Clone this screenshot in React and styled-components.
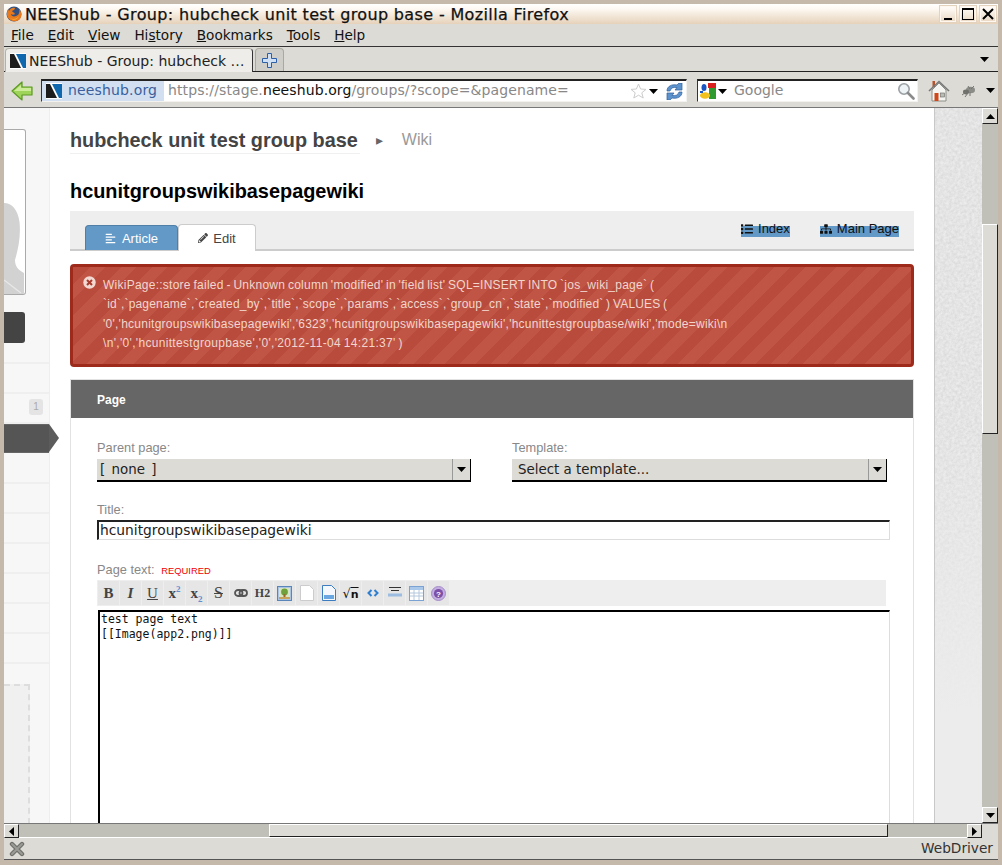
import React from "react";
import styled, { createGlobalStyle } from "styled-components";
import { FaAlignLeft, FaPencilAlt, FaList, FaSitemap } from "react-icons/fa";

const GlobalStyle = createGlobalStyle`
  html, body {
    margin: 0;
    padding: 0;
    width: 1002px;
    height: 865px;
    overflow: hidden;
    background: #c4b9ab;
  }
  * { box-sizing: border-box; }
`;

const chromeFont = `"DejaVu Sans", sans-serif`;
const pageFont = `"Liberation Sans", Arial, sans-serif`;

const noise = encodeURIComponent(
  `<svg xmlns="http://www.w3.org/2000/svg" width="96" height="240"><filter id="n"><feTurbulence type="fractalNoise" baseFrequency=".35" numOctaves="3" stitchTiles="stitch"/><feColorMatrix values="0 0 0 0 .55 0 0 0 0 .55 0 0 0 0 .55 .7 0 0 0 -.15"/></filter><rect width="96" height="240" filter="url(#n)"/></svg>`
);

const NLogo = ({ size = 16 }) => (
  <svg width={size} height={size} viewBox="0 0 16 16">
    <rect width="16" height="16" fill="#fff" />
    <polygon points="0,1 4,1 11,15 0,15" fill="#1c1c1c" />
    <polygon points="6,1 16,1 16,15 13,15" fill="#0f68ad" />
  </svg>
);

const Triangle = () => (
  <svg width="9" height="5" viewBox="0 0 9 5">
    <polygon points="0,0 9,0 4.5,5" fill="#000" />
  </svg>
);

const Firefox = () => (
  <svg width="16" height="16" viewBox="0 0 16 16">
    <circle cx="8" cy="8" r="7.5" fill="#33507f" />
    <path d="M2 3 C1 6 0 10 3 13 C6 16 11 16 14 13 C16 10 16 6 13 3 C14 6 13 9 10 10 C8 11 5 10 5 8 C6 9 8 9 9 8 C8 6 6 6 6 5 C7 4 9 4 9 2 C6 1 4 3 3 5 Z" fill="#e8791c" />
    <path d="M4 12 C7 14 11 13 13 10 C12 14 7 15 4 12 Z" fill="#f5b13a" />
  </svg>
);

const BackArrow = () => (
  <svg width="22" height="20" viewBox="0 0 22 20">
    <path d="M1 10 L11 1 L11 6 L21 6 L21 14 L11 14 L11 19 Z" fill="#9fd45a" stroke="#5c9a22" strokeWidth="1.2" strokeLinejoin="round" />
    <path d="M3 10 L10 4 L10 7 L20 7 L20 10 Z" fill="#cdec9a" />
  </svg>
);

const Star = () => (
  <svg width="17" height="16" viewBox="0 0 17 16">
    <polygon points="8.5,1 10.6,6 16,6.4 11.8,9.8 13.2,15 8.5,12.2 3.8,15 5.2,9.8 1,6.4 6.4,6" fill="#fff" stroke="#ccc" />
  </svg>
);

const Reload = () => (
  <svg width="17" height="17" viewBox="0 0 17 17">
    <path d="M1 8 C1 3 6 1 11 2 L13 0 L16 0 L16 7 L9 7 L11 4.5 C7 4 5 5 4 8 Z" fill="#5d93cc" stroke="#2f5f9c" strokeWidth=".7" />
    <path d="M16 9 C16 14 11 16 6 15 L4 17 L1 17 L1 10 L8 10 L6 12.5 C10 13 12 12 13 9 Z" fill="#5d93cc" stroke="#2f5f9c" strokeWidth=".7" />
  </svg>
);

const GoogleMark = () => (
  <svg width="16" height="16" viewBox="0 0 16 16">
    <rect x="8" y="0" width="8" height="5" fill="#d8201c" />
    <ellipse cx="4" cy="4.5" rx="2.5" ry="3.5" fill="#1a55c4" />
    <rect x="9" y="5" width="7" height="11" fill="#2f9a2f" />
    <ellipse cx="5" cy="12.5" rx="5" ry="3.2" fill="#f2c11e" />
    <rect x="0" y="8" width="3" height="2" fill="#1a55c4" />
  </svg>
);

const Magnifier = () => (
  <svg width="18" height="18" viewBox="0 0 18 18">
    <circle cx="7" cy="7" r="5.2" fill="#eef3f6" stroke="#9aa0a4" strokeWidth="1.6" />
    <path d="M11 11 L16.5 16.5" stroke="#8a8a8a" strokeWidth="2.6" strokeLinecap="round" />
  </svg>
);

const HomeIcon = () => (
  <svg width="22" height="22" viewBox="0 0 22 22">
    <rect x="4.5" y="1" width="2.5" height="6" fill="#b5532c" />
    <polygon points="4,10 11,3 18,10 18,21 4,21" fill="#f4f4f0" stroke="#8d8f8a" />
    <path d="M1 11 L11 1.5 L21 11" fill="none" stroke="#777" strokeWidth="1.6" />
    <rect x="6.5" y="13" width="4" height="8" fill="#d0471a" />
    <rect x="12.5" y="13" width="4" height="4" fill="#b9bdb4" stroke="#666" strokeWidth=".6" />
  </svg>
);

const BugIcon = () => (
  <svg width="16" height="14" viewBox="0 0 16 14">
    <ellipse cx="9.5" cy="6" rx="4.5" ry="3.2" fill="#8b8b88" />
    <ellipse cx="5" cy="8" rx="3" ry="2.4" fill="#6f6f6c" />
    <path d="M1 11 L5 8 M4 13 L7 9 M9 12 L9 8 M13 2 L10 5 M7 2 L9 5" stroke="#777" strokeWidth="1" />
  </svg>
);

const ScrollArrow = ({ dir }) => {
  const points = {
    up: "0,5 9,5 4.5,0",
    down: "0,0 9,0 4.5,5",
    left: "5,0 5,9 0,4.5",
    right: "0,0 0,9 5,4.5",
  }[dir];
  const vertical = dir === "up" || dir === "down";
  return (
    <svg width={vertical ? 9 : 5} height={vertical ? 5 : 9} viewBox={vertical ? "0 0 9 5" : "0 0 5 9"}>
      <polygon points={points} fill="#000" />
    </svg>
  );
};

const Silhouette = () => (
  <svg width="20" height="100" viewBox="0 0 20 100">
    <path d="M0 9 C8 9 14 16 15.5 28 C17 42 14 56 11 66 C11 72 14 76 20 79 L20 100 L0 100 Z" fill="#d2d2d2" />
    <path d="M0 86 L17 99" stroke="#e8e8e8" strokeWidth="1.2" />
  </svg>
);

const ErrorIcon = () => (
  <svg width="13" height="13" viewBox="0 0 13 13">
    <circle cx="6.5" cy="6.5" r="6.2" fill="#f3d9d2" />
    <path d="M4 4 L9 9 M9 4 L4 9" stroke="#a93b2d" strokeWidth="2" />
  </svg>
);

const StopIcon = () => (
  <svg width="16" height="16" viewBox="0 0 16 16">
    <path d="M3 3 L13 13 M13 3 L3 13" stroke="#6f6f6c" strokeWidth="4.4" strokeLinecap="round" />
    <path d="M3 3 L13 13 M13 3 L3 13" stroke="#9a9a96" strokeWidth="2" strokeLinecap="round" />
  </svg>
);

const tools = {
  image: (
    <svg width="15" height="15" viewBox="0 0 15 15">
      <rect x=".5" y=".5" width="14" height="14" fill="#a9c4e4" stroke="#5a85b8" />
      <rect x="2" y="2" width="11" height="11" fill="#d9e6c4" />
      <circle cx="7.5" cy="6" r="3.4" fill="#6fa03a" />
      <rect x="6.5" y="8" width="2" height="3" fill="#9a6a2c" />
      <rect x="2" y="11" width="11" height="2" fill="#c9a25a" />
    </svg>
  ),
  page: (
    <svg width="14" height="16" viewBox="0 0 14 16">
      <path d="M.5 .5 H9.5 L13.5 4.5 V15.5 H.5 Z" fill="#fff" stroke="#ccc" />
    </svg>
  ),
  pageBlue: (
    <svg width="14" height="16" viewBox="0 0 14 16">
      <path d="M.5 .5 H9.5 L13.5 4.5 V15.5 H.5 Z" fill="#f4f8fc" stroke="#3c7cc0" />
      <rect x="2" y="10" width="10" height="4" fill="#6aa6e0" />
    </svg>
  ),
  code: (
    <svg width="12" height="8" viewBox="0 0 12 8">
      <path d="M4.5 1 L1.5 4 L4.5 7 M7.5 1 L10.5 4 L7.5 7" fill="none" stroke="#2f7fd0" strokeWidth="2" />
    </svg>
  ),
  lines: (
    <svg width="14" height="14" viewBox="0 0 14 14">
      <path d="M1 1.5 H13 M3 4.5 H11" stroke="#333" strokeWidth="1" />
      <path d="M0 9 H14" stroke="#9cbce2" strokeWidth="3" />
    </svg>
  ),
  table: (
    <svg width="15" height="15" viewBox="0 0 15 15">
      <rect x=".5" y=".5" width="14" height="14" fill="#fff" stroke="#7aa2d2" />
      <rect x="1" y="1" width="13" height="3" fill="#a9c8ea" />
      <path d="M1 7 H14 M1 10 H14 M5 4 V14 M10 4 V14" stroke="#b4c8de" />
    </svg>
  ),
  help: (
    <svg width="15" height="15" viewBox="0 0 15 15">
      <circle cx="7.5" cy="7.5" r="7" fill="#c2aee0" stroke="#a58cc8" />
      <circle cx="7.5" cy="7.5" r="4.6" fill="#7c4fa8" />
      <text x="7.5" y="10.5" fontSize="8" fontWeight="bold" fill="#fff" textAnchor="middle" fontFamily="Liberation Sans">?</text>
    </svg>
  ),
  link: (
    <svg width="14" height="8" viewBox="0 0 14 8">
      <rect x="1" y="1" width="7.5" height="6" rx="3" fill="none" stroke="#555" strokeWidth="1.8" />
      <rect x="5.5" y="1" width="7.5" height="6" rx="3" fill="none" stroke="#555" strokeWidth="1.8" />
    </svg>
  ),
};

const App = () => {
  return (
    <>
      <GlobalStyle />
      <Frame>
        <TitleBar>
          <Firefox />
          <TitleText>NEEShub - Group: hubcheck unit test group base - Mozilla Firefox</TitleText>
          <WinButtons>
            <WinButton><MinBar /></WinButton>
            <WinButton><MaxBox /></WinButton>
            <WinButton>
              <svg width="12" height="12" viewBox="0 0 12 12">
                <path d="M1 1 L11 11 M11 1 L1 11" stroke="#000" strokeWidth="2" />
              </svg>
            </WinButton>
          </WinButtons>
        </TitleBar>

        <MenuBar>
          <MenuItem><u>F</u>ile</MenuItem>
          <MenuItem><u>E</u>dit</MenuItem>
          <MenuItem><u>V</u>iew</MenuItem>
          <MenuItem>Hi<u>s</u>tory</MenuItem>
          <MenuItem><u>B</u>ookmarks</MenuItem>
          <MenuItem><u>T</u>ools</MenuItem>
          <MenuItem><u>H</u>elp</MenuItem>
        </MenuBar>

        <TabStrip>
          <BrowserTab>
            <NLogo />
            <BrowserTabText>NEEShub - Group: hubcheck …</BrowserTabText>
          </BrowserTab>
          <NewTab>
            <svg width="15" height="15" viewBox="0 0 15 15">
              <path d="M5.5 .5 H9.5 V5.5 H14.5 V9.5 H9.5 V14.5 H5.5 V9.5 H.5 V5.5 H5.5 Z" fill="#cfe0f4" stroke="#2d5fa8" />
            </svg>
          </NewTab>
          <TabListArrow><Triangle /></TabListArrow>
        </TabStrip>

        <NavBar>
          <BackSlot><BackArrow /></BackSlot>
          <UrlBar>
            <Identity>
              <NLogo />
              <BarText>neeshub.org</BarText>
            </Identity>
            <UrlText>https://stage.<b>neeshub.org</b>/groups/?scope=&amp;pagename=</UrlText>
            <UrlIcons>
              <Star />
              <Triangle />
              <ReloadSlot><Reload /></ReloadSlot>
            </UrlIcons>
          </UrlBar>
          <SearchBar>
            <GoogleMark />
            <SearchArrow><Triangle /></SearchArrow>
            <SearchText>Google</SearchText>
            <Magnifier />
          </SearchBar>
          <NavEnd>
            <HomeIcon />
            <BugIcon />
            <Triangle />
          </NavEnd>
        </NavBar>

        <Viewport>
          <Sidebar>
            <PhotoCard><Silhouette /></PhotoCard>
            <DarkButton />
            <SideRow $first />
            <SideRow />
            <SideRow><Badge>1</Badge></SideRow>
            <ActiveRow />
            <SideRow />
            <SideRow />
            <SideRow />
            <SideRow />
            <SideRow />
            <SideRow />
            <SideRow />
            <DashedBox />
          </Sidebar>

          <Main>
            <TitleRow>
              <GroupTitle>hubcheck unit test group base</GroupTitle>
              <Crumb>▸</Crumb>
              <CrumbLink>Wiki</CrumbLink>
            </TitleRow>
            <PageHeading>hcunitgroupswikibasepagewiki</PageHeading>

            <TabBar>
              <ArticleTab><FaAlignLeft size={11} />Article</ArticleTab>
              <EditTab><FaPencilAlt size={10} />Edit</EditTab>
              <TabLinks>
                <TabLink><FaList size={12} />Index</TabLink>
                <TabLink><FaSitemap size={12} />Main Page</TabLink>
              </TabLinks>
            </TabBar>

            <ErrorBox>
              <ErrorIconSlot><ErrorIcon /></ErrorIconSlot>
              <ErrorLines>
                <ErrorLine $ls={0.25}>WikiPage::store failed - Unknown column 'modified' in 'field list' SQL=INSERT INTO `jos_wiki_page` (</ErrorLine>
                <ErrorLine $ls={0.17}>`id`,`pagename`,`created_by`,`title`,`scope`,`params`,`access`,`group_cn`,`state`,`modified` ) VALUES (</ErrorLine>
                <ErrorLine $ls={0.25}>'0','hcunitgroupswikibasepagewiki','6323','hcunitgroupswikibasepagewiki','hcunittestgroupbase/wiki','mode=wiki\n</ErrorLine>
                <ErrorLine $ls={0.32}>\n','0','hcunittestgroupbase','0','2012-11-04 14:21:37' )</ErrorLine>
              </ErrorLines>
            </ErrorBox>

            <Panel>
              <PanelHead>Page</PanelHead>
              <PanelBody>
                <SelectRow>
                  <SelectField $w={374}>
                    <FieldLabel>Parent page:</FieldLabel>
                    <SelectBox $pad={3}>
                      <NoneText>[ none ]</NoneText>
                      <SelectArrow><Triangle /></SelectArrow>
                    </SelectBox>
                  </SelectField>
                  <SelectField $w={375}>
                    <FieldLabel>Template:</FieldLabel>
                    <SelectBox $pad={6}>
                      <span>Select a template...</span>
                      <SelectArrow><Triangle /></SelectArrow>
                    </SelectBox>
                  </SelectField>
                </SelectRow>

                <FieldLabel $top={20}>Title:</FieldLabel>
                <TitleInput>hcunitgroupswikibasepagewiki</TitleInput>

                <FieldLabel $top={22}>
                  Page text: <Required>REQUIRED</Required>
                </FieldLabel>
                <Toolbar>
                  <ToolButton><ToolB>B</ToolB></ToolButton>
                  <ToolButton><ToolI>I</ToolI></ToolButton>
                  <ToolButton><ToolU>U</ToolU></ToolButton>
                  <ToolButton><ToolB>x<Sup>2</Sup></ToolB></ToolButton>
                  <ToolButton><ToolB>x<Sub>2</Sub></ToolB></ToolButton>
                  <ToolButton><ToolS>S</ToolS></ToolButton>
                  <ToolButton>{tools.link}</ToolButton>
                  <ToolButton><ToolH>H2</ToolH></ToolButton>
                  <ToolButton>{tools.image}</ToolButton>
                  <ToolButton>{tools.page}</ToolButton>
                  <ToolButton>{tools.pageBlue}</ToolButton>
                  <ToolButton><ToolRoot>√<Radicand>n</Radicand></ToolRoot></ToolButton>
                  <ToolButton>{tools.code}</ToolButton>
                  <ToolButton>{tools.lines}</ToolButton>
                  <ToolButton>{tools.table}</ToolButton>
                  <ToolButton>{tools.help}</ToolButton>
                </Toolbar>
                <TextArea>{"test page text\n[[Image(app2.png)]]"}</TextArea>
              </PanelBody>
            </Panel>
          </Main>

          <Gutter />

          <VScroll>
            <ScrollButton $h={16}><ScrollArrow dir="up" /></ScrollButton>
            <VTrack>
              <VThumb />
            </VTrack>
            <ScrollButton $h={16}><ScrollArrow dir="down" /></ScrollButton>
          </VScroll>
        </Viewport>

        <HScrollRow>
          <HButton><ScrollArrow dir="left" /></HButton>
          <HTrack>
            <HThumb />
          </HTrack>
          <HButton><ScrollArrow dir="right" /></HButton>
        </HScrollRow>

        <StatusBar>
          <StopIcon />
          <StatusText>WebDriver</StatusText>
        </StatusBar>
      </Frame>
    </>
  );
};

export default App;

const Frame = styled.div`
  width: 1002px;
  height: 865px;
  padding: 4px 4px 0;
  display: flex;
  flex-direction: column;
  overflow: hidden;
  font-family: ${chromeFont};
`;
const TitleBar = styled.div`
  height: 20px;
  flex: none;
  display: flex;
  align-items: center;
  padding-left: 2px;
  background: linear-gradient(#fff, #fdf8f2 25%, #e6d2ba);
`;
const TitleText = styled.div`
  margin-left: 3px;
  font-size: 16px;
  letter-spacing: 0.36px;
  color: #111;
  white-space: nowrap;
  -webkit-text-stroke: 0.25px #111;
`;
const WinButtons = styled.div`
  margin-left: auto;
  display: flex;
  gap: 2px;
  padding-right: 1px;
`;
const WinButton = styled.div`
  width: 18px;
  height: 18px;
  border: 2px solid #fdf7ef;
  outline: 1px solid #e3d2bd;
  outline-offset: -1px;
  display: flex;
  align-items: center;
  justify-content: center;
`;
const MinBar = styled.div`
  width: 8px;
  height: 2px;
  background: #000;
  margin-top: 9px;
`;
const MaxBox = styled.div`
  width: 12px;
  height: 12px;
  border: 1px solid #000;
  border-top-width: 2px;
`;
const MenuBar = styled.div`
  height: 23px;
  flex: none;
  background: #dcdbd5;
  border-bottom: 1px solid #333;
  display: flex;
  align-items: center;
  padding-left: 7px;
  gap: 14px;
  font-size: 13.6px;
  color: #111;
`;
const MenuItem = styled.span``;
const TabStrip = styled.div`
  height: 25px;
  flex: none;
  display: flex;
  align-items: flex-end;
  background: #dcdbd5;
  border-bottom: 1px solid #222;
  padding-left: 1px;
`;
const BrowserTab = styled.div`
  width: 248px;
  height: 24px;
  margin-bottom: -1px;
  background: #eeedea;
  border: 1px solid #b4b2a8;
  border-bottom: none;
  border-right: 1px solid #333;
  border-radius: 4px 4px 0 0;
  display: flex;
  align-items: center;
  gap: 3px;
  padding-left: 4px;
  font-size: 14px;
  color: #222;
`;
const BrowserTabText = styled.div`
  white-space: nowrap;
`;
const NewTab = styled.div`
  width: 29px;
  height: 23px;
  margin-left: 2px;
  background: #cfcec8;
  border: 1px solid #aaa89f;
  border-bottom: none;
  border-radius: 4px 4px 0 0;
  display: flex;
  align-items: center;
  justify-content: center;
`;
const TabListArrow = styled.div`
  margin-left: auto;
  align-self: center;
  display: flex;
  padding-right: 9px;
`;
const NavBar = styled.div`
  height: 36px;
  flex: none;
  background: #dcdbd5;
  border-bottom: 1px solid #777;
  display: flex;
  align-items: flex-start;
  padding-top: 7px;
`;
const BackSlot = styled.div`
  width: 37px;
  padding: 2px 0 0 7px;
  flex: none;
`;
const UrlBar = styled.div`
  width: 646px;
  height: 23px;
  flex: none;
  background: #fff;
  border-top: 2px solid #222;
  border-left: 1px solid #333;
  border-right: 1px solid #f3f2ee;
  border-bottom: 1px solid #f3f2ee;
  display: flex;
  align-items: center;
  font-size: 14px;
`;
const Identity = styled.div`
  width: 122px;
  height: 100%;
  flex: none;
  background: #d1dff1;
  color: #3b5f9c;
  display: flex;
  align-items: center;
  gap: 6px;
  padding-left: 4px;
  letter-spacing: 0.15px;
`;
const BarText = styled.span`
  margin-top: -2px;
`;
const UrlText = styled.div`
  margin: -2px 0 0 4px;
  color: #888;
  white-space: nowrap;
  letter-spacing: 0.1px;
  b {
    font-weight: normal;
    color: #111;
  }
`;
const UrlIcons = styled.div`
  margin-left: auto;
  display: flex;
  align-items: center;
  gap: 2px;
  padding-right: 3px;
`;
const ReloadSlot = styled.div`
  margin-left: 6px;
  display: flex;
`;
const SearchBar = styled.div`
  width: 221px;
  height: 23px;
  margin-left: 10px;
  flex: none;
  background: #fff;
  border-top: 2px solid #222;
  border-left: 1px solid #333;
  border-right: 1px solid #f3f2ee;
  border-bottom: 1px solid #f3f2ee;
  display: flex;
  align-items: center;
  padding: 0 2px 0 2px;
`;
const SearchArrow = styled.div`
  display: flex;
  margin-left: 2px;
`;
const SearchText = styled.div`
  margin: -2px 0 0 7px;
  flex: 1;
  font-size: 14px;
  color: #888;
`;
const NavEnd = styled.div`
  margin-left: 10px;
  display: flex;
  align-items: center;
  gap: 11px;
  height: 23px;
  svg:last-child {
    margin-left: -2px;
  }
`;
const Viewport = styled.div`
  flex: none;
  height: 715px;
  display: flex;
  overflow: hidden;
`;
const Sidebar = styled.div`
  width: 46px;
  flex: none;
  background: #f7f7f7;
  border-right: 1px solid #eee;
  padding-top: 21px;
  display: flex;
  flex-direction: column;
`;
const PhotoCard = styled.div`
  width: 22px;
  height: 166px;
  flex: none;
  background: #fff;
  border: 1px solid #aaa;
  border-left: none;
  border-radius: 0 3px 3px 0;
  display: flex;
  align-items: flex-end;
  overflow: hidden;
`;
const DarkButton = styled.div`
  width: 21px;
  height: 31px;
  flex: none;
  margin-top: 17px;
  background: #444;
  border-radius: 0 3px 3px 0;
`;
const SideRow = styled.div`
  height: ${(p) => (p.$first ? 21 : 30)}px;
  flex: none;
  border-bottom: 2px solid #efefef;
  position: relative;
`;
const Badge = styled.div`
  position: absolute;
  left: 25px;
  top: 5px;
  width: 14px;
  height: 16px;
  background: #e4e4e4;
  border-radius: 3px;
  color: #aaa;
  font: 10px/16px ${pageFont};
  text-align: center;
`;
const ActiveRow = styled.div`
  height: 29px;
  flex: none;
  margin-bottom: 1px;
  background: #555;
  border-top: 1px solid #666;
  border-bottom: 1px solid #666;
  position: relative;
  z-index: 1;
  &::after {
    content: "";
    position: absolute;
    left: 100%;
    top: -1px;
    border-top: 14.5px solid transparent;
    border-bottom: 14.5px solid transparent;
    border-left: 10px solid #5c5c5c;
  }
`;
const DashedBox = styled.div`
  width: 26px;
  height: 140px;
  flex: none;
  margin-top: 20px;
  background: #f0f0f0;
  border-top: 2px dashed #ddd;
  border-right: 2px dashed #ddd;
`;
const Main = styled.div`
  width: 884px;
  flex: none;
  background: #fff;
  padding-left: 20px;
  overflow: hidden;
`;
const TitleRow = styled.div`
  height: 46px;
  display: flex;
  align-items: flex-start;
  padding-top: 20px;
`;
const GroupTitle = styled.div`
  font: bold 19.85px/24px ${pageFont};
  color: #444;
  height: 26px;
  padding-right: 2px;
  border-bottom: 1px solid #f0f0f0;
`;
const Crumb = styled.span`
  margin-left: 16px;
  font: 14px/24px ${pageFont};
  color: #666;
`;
const CrumbLink = styled.span`
  margin-left: 19px;
  font: 16px/24px ${pageFont};
  color: #999;
`;
const PageHeading = styled.h2`
  margin: 25px 0 8px;
  font: bold 19.9px/24px ${pageFont};
  color: #000;
`;
const TabBar = styled.div`
  width: 844px;
  height: 40px;
  background: #eee;
  border-bottom: 2px solid #ccc;
  display: flex;
  align-items: flex-end;
  padding-left: 15px;
  font: 13px ${pageFont};
`;
const ArticleTab = styled.div`
  width: 93px;
  height: 25px;
  margin-bottom: -1px;
  background: #6399c6;
  border: 1px solid #4f7ea6;
  border-bottom: none;
  border-radius: 4px 4px 0 0;
  color: #fff;
  display: flex;
  align-items: center;
  justify-content: center;
  gap: 6px;
`;
const EditTab = styled.div`
  width: 78px;
  height: 27px;
  margin-bottom: -2px;
  background: #fff;
  border: 1px solid #ccc;
  border-bottom: none;
  border-radius: 4px 4px 0 0;
  color: #444;
  display: flex;
  align-items: center;
  justify-content: center;
  gap: 5px;
`;
const TabLinks = styled.div`
  margin-left: auto;
  align-self: flex-start;
  margin-top: 15px;
  padding-right: 15px;
  display: flex;
  gap: 30px;
`;
const TabLink = styled.div`
  height: 11px;
  display: flex;
  align-items: flex-start;
  gap: 5px;
  background: #6399c6;
  color: #111;
  line-height: 6px;
  white-space: nowrap;
  svg {
    margin-top: -3px;
  }
`;
const ErrorBox = styled.div`
  width: 844px;
  height: 103px;
  margin-top: 13px;
  display: flex;
  padding: 9px 0 0 10px;
  border: 3px solid #9e2a1c;
  border-radius: 4px;
  background: repeating-linear-gradient(
    -45deg,
    #c05545 0,
    #c05545 11px,
    #b84b3c 11px,
    #b84b3c 22px
  );
`;
const ErrorIconSlot = styled.div`
  width: 20px;
  flex: none;
  margin-top: -2px;
`;
const ErrorLines = styled.div`
  font: 12px/19.3px ${pageFont};
  color: #f2d5cd;
  white-space: nowrap;
  word-spacing: -0.85px;
`;
const ErrorLine = styled.div`
  letter-spacing: ${(p) => p.$ls}px;
`;
const Panel = styled.div`
  width: 844px;
  margin-top: 12px;
  border: 1px solid #e2e2e2;
`;
const PanelHead = styled.div`
  height: 38px;
  background: #666;
  color: #fff;
  font: bold 12px/40px ${pageFont};
  padding-left: 26px;
`;
const PanelBody = styled.div`
  padding: 22px 0 0 26px;
`;
const SelectRow = styled.div`
  display: flex;
  gap: 41px;
`;
const SelectField = styled.div`
  width: ${(p) => p.$w}px;
`;
const FieldLabel = styled.div`
  margin-top: ${(p) => p.$top || 0}px;
  font: 12.8px/16px ${pageFont};
  color: #888;
`;
const SelectBox = styled.div`
  height: 23px;
  margin-top: 3px;
  background: #dcdbd5;
  border-bottom: 2px solid #000;
  display: flex;
  align-items: center;
  justify-content: space-between;
  padding-left: ${(p) => p.$pad}px;
  font: 13.4px ${chromeFont};
  color: #222;
`;
const NoneText = styled.span`
  word-spacing: 2px;
`;
const SelectArrow = styled.div`
  width: 19px;
  height: 21px;
  flex: none;
  border-left: 1px solid #999;
  border-right: 1px solid #000;
  display: flex;
  align-items: center;
  justify-content: center;
`;
const TitleInput = styled.div`
  width: 793px;
  height: 20px;
  margin-top: 2px;
  padding-left: 1px;
  background: #fff;
  border-top: 2px solid #222;
  border-left: 2px solid #222;
  border-right: 1px solid #ddd;
  border-bottom: 1px solid #ddd;
  font: 13.8px/17px ${chromeFont};
  color: #222;
`;
const Required = styled.span`
  margin-left: 3px;
  font-size: 9.4px;
  color: #e00;
`;
const Toolbar = styled.div`
  width: 789px;
  height: 26px;
  margin-top: 1px;
  background: #eee;
  display: flex;
  align-items: center;
  padding-left: 1px;
  gap: 1px;
`;
const ToolButton = styled.div`
  width: 21px;
  height: 24px;
  flex: none;
  background: #e6e6e6;
  display: flex;
  align-items: center;
  justify-content: center;
`;
const ToolB = styled.span`
  font: bold 15px "Liberation Serif", serif;
  color: #444;
`;
const ToolI = styled(ToolB)`
  font-style: italic;
`;
const ToolU = styled.span`
  font: 15px "Liberation Serif", serif;
  color: #444;
  text-decoration: underline;
`;
const ToolS = styled(ToolU)`
  font-size: 16px;
  text-decoration: line-through;
`;
const ToolH = styled(ToolB)`
  font-size: 12px;
`;
const ToolRoot = styled.span`
  font: 13px "DejaVu Sans", sans-serif;
  color: #111;
`;
const Radicand = styled.span`
  font-size: 11px;
  font-weight: bold;
  text-decoration: overline;
`;
const Sup = styled.sup`
  font-size: 9px;
  color: #5a8fd0;
  line-height: 0;
`;
const Sub = styled.sub`
  font-size: 9px;
  color: #5a8fd0;
  line-height: 0;
`;
const TextArea = styled.div`
  width: 792px;
  height: 230px;
  margin: 4px 0 0 1px;
  padding-left: 1px;
  background: #fff;
  border-top: 2px solid #000;
  border-left: 2px solid #000;
  border-right: 1px solid #ddd;
  font: 11.5px/15px "DejaVu Sans Mono", monospace;
  color: #111;
  white-space: pre;
`;
const Gutter = styled.div`
  width: 48px;
  flex: none;
  border-left: 1px solid #c8c8c8;
  background-color: #ececec;
  background-image:
    linear-gradient(transparent 45%, #ececec 85%),
    url("data:image/svg+xml,${noise}");
`;
const VScroll = styled.div`
  width: 16px;
  flex: none;
  display: flex;
  flex-direction: column;
  background: #c0bfb8;
`;
const ScrollButton = styled.div`
  height: ${(p) => p.$h}px;
  flex: none;
  background: #dcdbd5;
  border-top: 1px solid #fff;
  border-left: 1px solid #fff;
  border-right: 1px solid #222;
  border-bottom: 1px solid #222;
  display: flex;
  align-items: center;
  justify-content: center;
`;
const VTrack = styled.div`
  flex: 1;
  padding-top: 100px;
`;
const VThumb = styled.div`
  height: 210px;
  background: #dcdbd5;
  border-top: 1px solid #fff;
  border-left: 1px solid #fff;
  border-right: 1px solid #222;
  border-bottom: 1px solid #222;
`;
const HScrollRow = styled.div`
  height: 15px;
  flex: none;
  display: flex;
  background: #dcdbd5;
  padding-right: 16px;
  border-top: 1px solid #777;
`;
const HButton = styled.div`
  width: 15px;
  flex: none;
  background: #dcdbd5;
  border-top: 1px solid #fff;
  border-left: 1px solid #fff;
  border-right: 1px solid #222;
  border-bottom: 1px solid #222;
  display: flex;
  align-items: center;
  justify-content: center;
`;
const HTrack = styled.div`
  flex: 1;
  background: #c0bfb8;
  padding-left: 250px;
  padding-right: 79px;
  border-bottom: 1px solid #fff;
`;
const HThumb = styled.div`
  height: 100%;
  background: #dcdbd5;
  border-top: 1px solid #fff;
  border-left: 1px solid #fff;
  border-right: 1px solid #222;
  border-bottom: 1px solid #222;
`;
const StatusBar = styled.div`
  height: 22px;
  flex: none;
  background: #dcdbd5;
  border-bottom: 1px solid #555;
  display: flex;
  align-items: center;
  padding: 0 5px;
`;
const StatusText = styled.div`
  margin: -1px 0 0 auto;
  font-size: 13.7px;
  color: #333;
`;
